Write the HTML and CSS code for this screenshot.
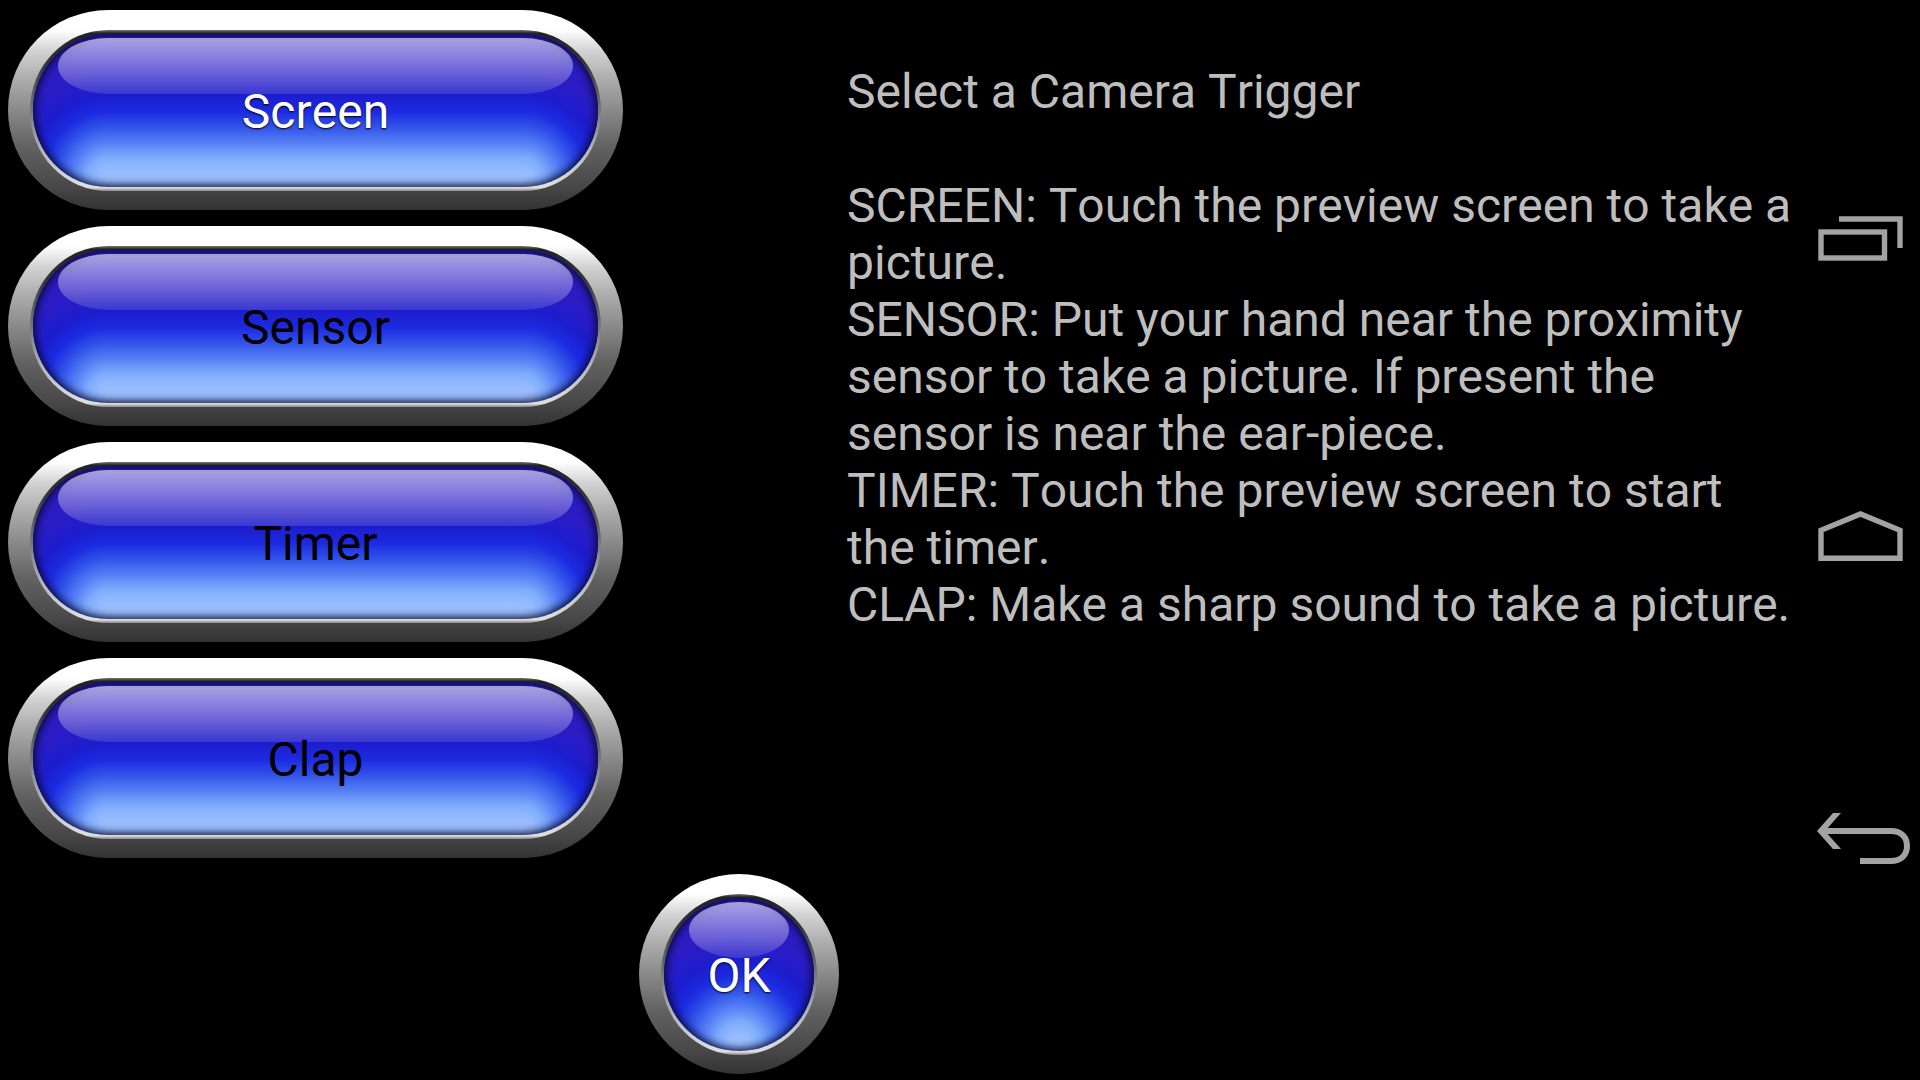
FILE: index.html
```
<!DOCTYPE html>
<html lang="en">
<head>
    <meta charset="UTF-8">
    <meta name="viewport" content="width=device-width, initial-scale=1.0">
    <title>Select a Camera Trigger</title>
    <link rel="stylesheet" href="styles.css">
</head>
<body>
    <main class="chooser">
        <div class="triggers">
            <button class="glossy selected" type="button"><span>Screen</span></button>
            <button class="glossy" type="button"><span>Sensor</span></button>
            <button class="glossy" type="button"><span>Timer</span></button>
            <button class="glossy" type="button"><span>Clap</span></button>
        </div>

        <div class="confirm">
            <button class="glossy selected" type="button"><span>OK</span></button>
        </div>

        <div class="help">
            <h1>Select a Camera Trigger</h1>
            <p>SCREEN: Touch the preview screen to take a picture.</p>
            <p>SENSOR: Put your hand near the proximity sensor to take a picture. If present the sensor is near the ear-piece.</p>
            <p>TIMER: Touch the preview screen to start the timer.</p>
            <p>CLAP: Make a sharp sound to take a picture.</p>
        </div>
    </main>

    <nav class="navbar">
        <button type="button" aria-label="Recent apps">
            <svg viewBox="0 0 120 80" fill="none" stroke="#a3a3a3" stroke-width="5.4">
                <rect x="21" y="32" width="63.5" height="26"/>
                <path d="M39 19H100V48"/>
            </svg>
        </button>
        <button type="button" aria-label="Home">
            <svg viewBox="0 0 120 80" fill="none" stroke="#a3a3a3" stroke-width="5.4">
                <path d="M21 58.2V30.2L60.5 14L100 30.2V58.2Z"/>
            </svg>
        </button>
        <button type="button" aria-label="Back">
            <svg viewBox="0 0 120 80" fill="none" stroke="#a3a3a3" stroke-width="6">
                <path d="M25 31H91C101 31 107 37 107 46C107 55 101 61 91 61H60"/>
                <path d="M33 13H41L25 31L41 49H33L17 31Z" fill="#a3a3a3" stroke="none"/>
            </svg>
        </button>
    </nav>
</body>
</html>
```
FILE: styles.css
```
body {
    display: flex;
    min-height: 100vh;
    margin: 0;
    font-family: Roboto, sans-serif;
    font-size: 48px;
    font-kerning: none;
    line-height: 57px;
    color: #bebebe;
    background-color: #000;
}

button {
    padding: 0;
    border: none;
    font: inherit;
    font-kerning: none;
    background: none;
    cursor: pointer;
}

.chooser {
    flex: 1;
    display: grid;
    grid-template-columns: 35% 216px 1fr;
    grid-template-rows: auto 1fr;
}

.triggers {
    display: flex;
    flex-direction: column;
    gap: 16px;
    padding: 10px 7px 16px 8px;
}

.confirm {
    grid-column: 2;
    grid-row: 2;
    padding: 0 7px 0 9px;
}

.help {
    grid-column: 3;
    grid-row: 1 / 3;
    padding: 63px 4px 0 1px;
}

.help h1 {
    margin: 0 0 57px;
    font-size: 48px;
    font-weight: normal;
}

.help p {
    margin: 0;
}

/* Glossy button: metal ring, blue face (::before), highlight (::after) */
.glossy {
    --glow: #9fc2ff 0%, #92b8ff 12%, #7eacfc 21%, #4f78f3 37%, #2f50e8 50%, #1c2ae1 63%, #1d1dcd 78%, #2c1cc4 100%;
    position: relative;
    width: 100%;
    height: 200px;
    padding-top: 2px;
    border-radius: 100px;
    color: #000;
    background: linear-gradient(#fff 0%, #fff 10%, #d4d4d4 20%, #b0b0b0 33%, #8a8a8a 50%, #626262 68%, #484848 88%, #333 100%);
}

.glossy::before {
    content: "";
    position: absolute;
    inset: 20px 22px 19px;
    border: 4px solid transparent;
    border-width: 4px 3px;
    border-radius: 78px / 80px;
    background:
        radial-gradient(104px 110px at 100% 96%, var(--glow)) left / 75px 100% no-repeat padding-box,
        radial-gradient(104px 110px at 0% 96%, var(--glow)) right / 75px 100% no-repeat padding-box,
        radial-gradient(99999px 110px at 50% 96%, var(--glow)) padding-box,
        linear-gradient(#777 0%, #222 2%, #333 20%, #777 50%, #aaa 70%, #ddd 96%, #ddd 98%, #888 100%) border-box;
    box-shadow: inset 0 0 8px 2px #080830;
}

.glossy::after {
    content: "";
    position: absolute;
    inset: 28px 50px auto;
    height: 56px;
    border-radius: 50px / 28px;
    background: linear-gradient(rgba(255, 255, 255, 0.6), rgba(255, 255, 255, 0.12));
}

.glossy span {
    position: relative;
    z-index: 1;
}

.glossy.selected {
    color: #fff;
    text-shadow: 0 1px 2px #000;
}

.navbar {
    display: flex;
    flex-direction: column;
    justify-content: center;
    gap: 220px;
    width: 120px;
}

.navbar svg {
    display: block;
    width: 120px;
    height: 80px;
}
```
